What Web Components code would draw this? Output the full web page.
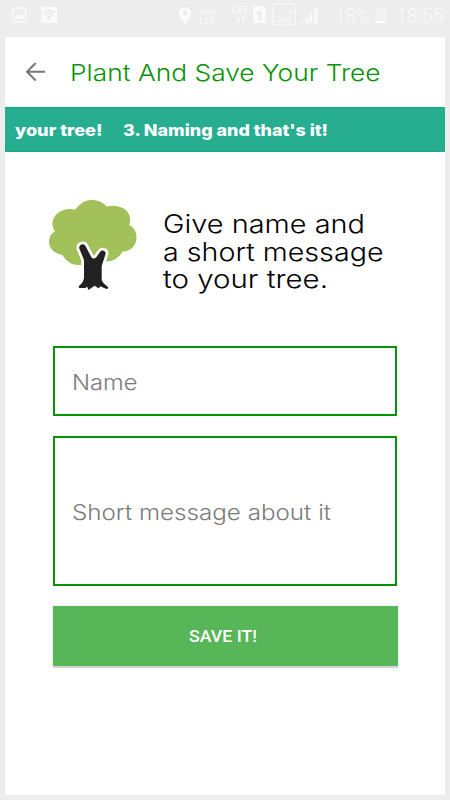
<!DOCTYPE html>
<html lang="en"><head><meta charset="utf-8"><title>Plant And Save Your Tree</title>
<style>body{margin:0;background:#ededed;font-family:Inter,"Open Sans",sans-serif}</style></head>
<body><tree-app></tree-app>
<script>
const define = (name, html) => customElements.define(name, class extends HTMLElement {
  constructor(){ super(); this.attachShadow({mode:'open'}).innerHTML = html; }
});

// One line of text set to an exact width; its baseline is the bottom of the box.
customElements.define('text-line', class extends HTMLElement {
  connectedCallback(){
    const w=this.getAttribute('w'), s=this.getAttribute('size'), wt=this.getAttribute('weight')||400;
    const root=this.shadowRoot||this.attachShadow({mode:'open'});
    root.innerHTML=`<style>:host{display:block;flex:none;height:${s}px;width:${w}px}svg{display:block;overflow:visible}
      text{font-size:${s}px;font-weight:${wt};fill:currentColor}</style>
      <svg width="${w}" height="${s}"><text x="0" y="${s}" textLength="${w}" lengthAdjust="spacingAndGlyphs"></text></svg>`;
    root.querySelector('text').textContent=this.getAttribute('text');
  }
});

define('status-bar', `<style>:host{display:block;height:37px;font-family:Roboto,sans-serif}svg{display:block}</style>
<svg width="450" height="37" viewBox="0 0 450 37" fill="#fafafa">
 <g><rect x="12.7" y="8" width="13" height="14" rx="1" fill="none" stroke="#fafafa" stroke-width="1.6"/>
 <path d="M15 19v-3l2-1 1-1 1.5 1 1.5-1.5 2 2.5v3z"/></g>
 <rect x="41" y="7" width="16" height="16" rx="1"/>
 <g fill="none" stroke="#e6e6e6" stroke-width="1.5"><path d="M43 13q6-5 12 0M45 15.300q4-3.500 8 0M47 17.500q2-1.700 4 0"/></g><circle cx="49" cy="19" r="1" fill="#e6e6e6"/>
 <path fill-rule="evenodd" d="M185 7a6 6 0 0 0-6 6c0 4.500 6 11 6 11s6-6.500 6-11a6 6 0 0 0-6-6zm0 3.800a2.300 2.300 0 1 1 0 4.600a2.300 2.300 0 0 1 0-4.600z"/>
 <g font-weight="700" fill="#f7f7f7"><text x="198.500" y="14.500" font-size="9" textLength="17">Vo))</text><text x="199" y="24" font-size="9.500" textLength="16" lengthAdjust="spacingAndGlyphs">LTE</text>
 <text x="232" y="13" font-size="9.500" textLength="17" lengthAdjust="spacingAndGlyphs">LTE</text></g>
 <path d="M238 16v3.500h-1.500l2 3 2-3H239V16zM242.500 22v-3H241l2.300-3 2.300 3H244.300v3z"/>
 <path d="M255 6h8l3 3v12a2 2 0 0 1-2 2h-9a2 2 0 0 1-2-2V8a2 2 0 0 1 2-2z"/>
 <text x="255.500" y="19.500" font-size="13" font-weight="700" fill="#e8e8e8">1</text>
 <rect x="273" y="4" width="22" height="21" rx="2" fill="none" stroke="#f7f7f7" stroke-width="1.500"/>
 <path d="M276 23L292 8v15z" fill="#f2f2f2"/><path d="M276 23l3-3v3z"/>
 <path d="M301 23l3-2.500V23zM305 19l3-2v6h-3zM309.500 15l3-2v10h-3zM314 10l3.500-3.500V23H314z"/>
 <g fill="#f9f9f9"><text x="335" y="22.500" font-size="20.500" font-weight="300" textLength="35" lengthAdjust="spacingAndGlyphs">18%</text>
 <text x="396.500" y="22.500" font-size="20.500" font-weight="300" textLength="47" lengthAdjust="spacingAndGlyphs">18:55</text></g>
 <path d="M378.500 6h5v2h3v13h-11V8h3z" fill="#f2f2f2"/><path d="M375.500 21h11v2h-11z" fill="#fff"/>
</svg>`);

define('app-header', `<style>:host{display:flex;height:70px;box-sizing:border-box;padding:21px 0 0 20px;color:#079307}svg{flex:none;margin:4px 24px 0 0}</style>
<svg width="21" height="22" fill="none" stroke="#777" stroke-width="2"><path d="M20 9.700H2M10.700 1L2 9.700l8.700 8.800"/></svg>
<text-line w="310.500" size="23" weight="350" text="Plant And Save Your Tree"></text-line>`);

define('step-banner', `<style>:host{display:flex;gap:20px;height:45px;box-sizing:border-box;padding:11.500px 0 0 10px;color:#fff;background:#27ae91;border-top:1px solid #12aa86;border-bottom:1px solid #12aa86}</style>
<text-line w="87.500" size="16.3" weight="800" text="your tree!"></text-line>
<text-line w="205" size="16.3" weight="800" text="3. Naming and that's it!"></text-line>`);

define('tree-logo', `<style>:host{display:block;flex:none;width:90px;height:93px}svg{display:block}</style>
<svg width="90" height="93" viewBox="48 199 90 93">
<path fill="#a2c15b" d="M75.500 209.500C80 203 86 200 92 200c6 0 11.500 2.500 14.500 6.500c12-3 25.500 3 23.500 15.500c-.1 1-.5 2-1 3c5 2 7.500 7 7.500 12.500c0 8-6 14-14 14c-4 7-10 10.500-17 9.500L80 265C72 266 65 260 62.500 255C54 253.500 49 248 49 241.500c0-4 2-8 6-10c-8-12 4-25.500 20.500-22z"/>
<path fill="#222" stroke="#fff" stroke-width="5.500" stroke-linejoin="round" paint-order="stroke" d="M79.300 248.500c-.8-4 4.500-5.700 6.200-2.500L91 256.500c1 2 3 3 5.500 .5L100 252c2-3 6.500-1 5.500 2.200L101.700 266v14c1 3 3.500 4.500 6.300 7c.8 1.500-.5 2.200-1.500 2L100 286.200l-1 2.300-4.500-2.700L88.500 290l-1.500-3.500L85.500 288H79.500c-1-.5-1-1.300-.5-2c3-2.500 5-5 5-9V260z"/>
</svg>`);

define('intro-block', `<style>:host{display:flex;gap:25px;padding:47px 0 0 43px;height:194px;box-sizing:border-box;color:#000}div{padding-top:8px;display:grid;gap:2px;align-content:start}</style>
<tree-logo></tree-logo><div><text-line w="202" size="25.500" weight="350" text="Give name and"></text-line>
<text-line w="220.500" size="25.500" weight="350" text="a short message"></text-line>
<text-line w="165" size="25.500" weight="350" text="to your tree."></text-line></div>`);

define('form-field', `<style>:host{display:flex;flex:none;box-sizing:border-box;width:344.500px;border:2px solid #079307;background:#fff;color:#7b7b7b;padding-left:17.500px;align-items:center}</style><slot></slot>`);

define('save-button', `<style>:host{display:flex;flex:none;box-sizing:border-box;width:345px;height:60px;background:#57b657;color:#fff;font-family:Roboto,sans-serif;justify-content:center;padding:19px 4px 0 0;box-shadow:0 2px 1px #d4d4d4,0 0 1px #bbb}</style><text-line w="68" size="17.400" weight="500" text="SAVE IT!"></text-line>`);

define('tree-app', `<style>:host{display:block;width:450px;height:800px;background:#ededed}main{width:440px;height:758px;margin:0 5px;background:#fff}
form{display:flex;flex-direction:column;gap:20px;padding-left:47.500px}.a{height:70px;padding-bottom:5.500px}.b{height:150px;padding-bottom:4px}</style>
<status-bar></status-bar><main><app-header></app-header><step-banner></step-banner><intro-block></intro-block>
<form><form-field class="a"><text-line w="65.500" size="21.500" weight="350" text="Name"></text-line></form-field>
<form-field class="b"><text-line w="259" size="21.500" weight="350" text="Short message about it"></text-line></form-field>
<save-button></save-button></form></main>`);
</script></body></html>
